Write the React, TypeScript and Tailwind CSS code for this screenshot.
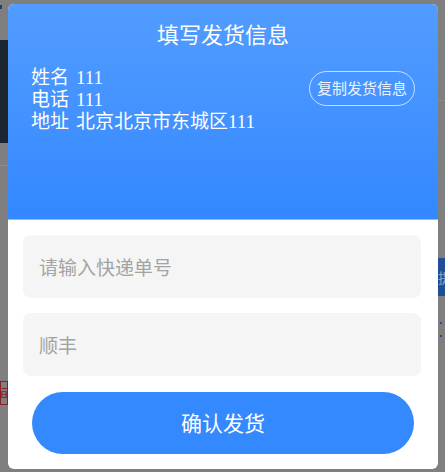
export default function App() {
  const serif = { fontFamily: '"Liberation Serif", "Noto Sans CJK SC", serif' };
  const sans = { fontFamily: '"Noto Sans CJK SC", "Liberation Sans", sans-serif' };

  const info = [
    ['姓名', '111'],
    ['电话', '111'],
    ['地址', '北京北京市东城区111'],
  ];

  return (
    <div className="relative w-[445px] h-[472px] overflow-hidden bg-[#7f7f7f]">
      {/* page behind the overlay */}
      <div className="absolute left-0 top-[5px] w-[2px] h-[4px] bg-[#1d3f77]" />
      <div className="absolute left-0 top-[40px] w-[8px] h-[103px] bg-[#1b2631]" />
      <div className="absolute left-0 top-[165px] w-[8px] h-[1px] bg-[#8c8c8c]" />
      <div className="absolute right-0 top-[100px] w-[8px] h-[1px] bg-[#8c8c8c]" />
      <div className="absolute right-0 top-[258px] w-[7px] h-[38px] bg-[#1f4e96] text-[#8ea6cc] text-[14px] leading-[38px] overflow-hidden" style={sans}>
        提
      </div>
      <div className="absolute right-[3px] top-[322px] w-[2px] h-[2px] bg-[#2b4c9a]" />
      <div className="absolute right-[3px] top-[335px] w-[2px] h-[2px] bg-[#2b4c9a]" />
      <div className="absolute left-0 top-[381px] w-[8px] h-[24px] border border-[#8a2020] overflow-hidden text-[#8a1c1c] text-[14px] leading-[22px]" style={sans}>
        <span className="-ml-[4px]">间</span>
      </div>

      {/* dialog */}
      <div className="relative pt-[4px] pl-[8px]">
        <div className="w-[430px] h-[465px] bg-white rounded-[6px] overflow-hidden flex flex-col">
          <div className="h-[216px] bg-gradient-to-b from-[#529cff] to-[#3388ff] border-b border-[#8fbcff] text-white">
            <h1 className="pt-[14px] text-center text-[22px] leading-[30px] font-normal" style={sans}>
              填写发货信息
            </h1>
            <div className="mt-[19px] px-[23px] flex items-start justify-between">
              <div className="text-[19px] leading-[22px]" style={serif}>
                {info.map(([k, v]) => (
                  <div key={k} className="flex">
                    <span>{k}</span>
                    <span className="ml-[7px]">{v}</span>
                  </div>
                ))}
              </div>
              <button
                className="mt-[4px] w-[106px] h-[35px] rounded-full border border-white/70 text-[15px] text-white/90 flex items-center justify-center"
                style={sans}
              >
                复制发货信息
              </button>
            </div>
          </div>

          <div className="pl-[15px] pr-[17px] pt-[15px] flex flex-col">
            <input
              className="h-[63px] rounded-[8px] bg-[#f5f5f5] px-[16px] text-[19px] text-[#333] placeholder:text-[#a3a3a3] outline-none"
              style={sans}
              placeholder="请输入快递单号"
            />
            <input
              className="mt-[15px] h-[63px] rounded-[8px] bg-[#f5f5f5] px-[16px] text-[19px] text-[#a3a3a3] outline-none"
              style={sans}
              defaultValue="顺丰"
            />
            <button
              className="mt-[16px] ml-[9px] mr-[7px] h-[62px] rounded-full bg-[#3489fe] text-white text-[21px]"
              style={sans}
            >
              确认发货
            </button>
          </div>
        </div>
      </div>
    </div>
  );
}
